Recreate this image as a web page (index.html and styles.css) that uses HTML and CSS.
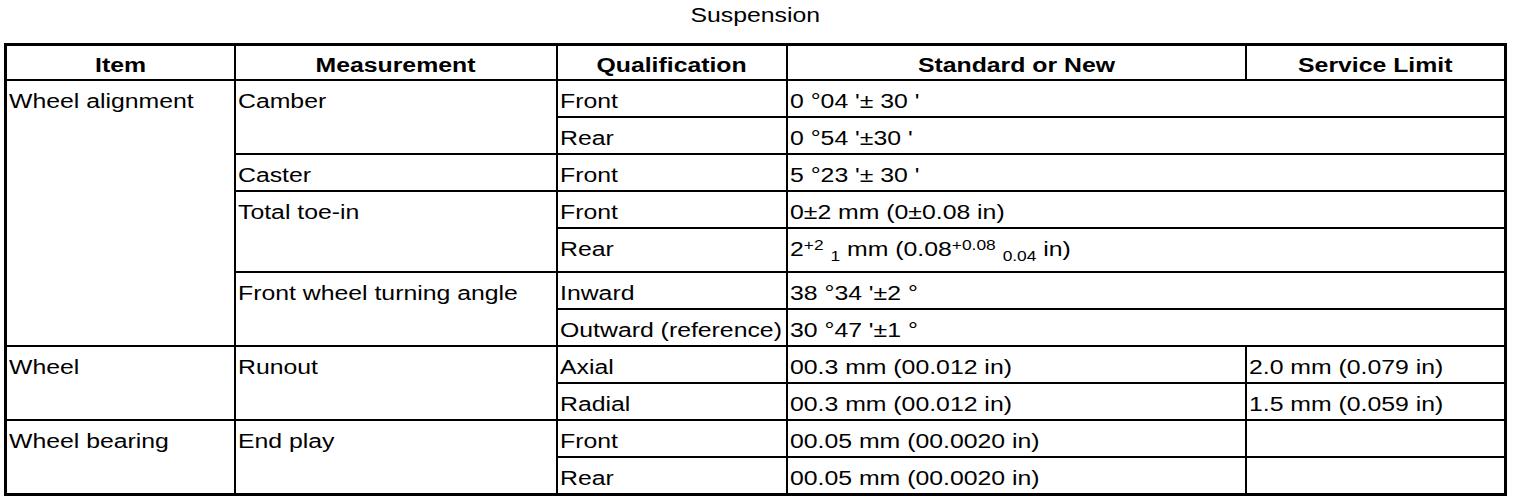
FILE: index.html
```html
<!DOCTYPE html>
<html>
<head>
<meta charset="utf-8">
<link rel="stylesheet" href="styles.css">
</head>
<body>
<div class="page">
  <div class="title"><span class="t c">Suspension</span></div>
  <table class="spec">
    <colgroup>
      <col class="c1"><col class="c2"><col class="c3"><col class="c4"><col class="c5">
    </colgroup>
    <thead>
      <tr class="head">
        <th><span class="t c">Item</span></th>
        <th><span class="t c">Measurement</span></th>
        <th><span class="t c">Qualification</span></th>
        <th><span class="t c">Standard or New</span></th>
        <th><span class="t c">Service Limit</span></th>
      </tr>
    </thead>
    <tbody>
      <tr>
        <td rowspan="7"><span class="t">Wheel alignment</span></td>
        <td rowspan="2"><span class="t">Camber</span></td>
        <td><span class="t">Front</span></td>
        <td colspan="2"><span class="t">0 °04 '± 30 '</span></td>
      </tr>
      <tr>
        <td><span class="t">Rear</span></td>
        <td colspan="2"><span class="t">0 °54 '±30 '</span></td>
      </tr>
      <tr>
        <td><span class="t">Caster</span></td>
        <td><span class="t">Front</span></td>
        <td colspan="2"><span class="t">5 °23 '± 30 '</span></td>
      </tr>
      <tr>
        <td rowspan="2"><span class="t">Total toe-in</span></td>
        <td><span class="t">Front</span></td>
        <td colspan="2"><span class="t">0±2 mm (0±0.08 in)</span></td>
      </tr>
      <tr class="tall">
        <td><span class="t">Rear</span></td>
        <td colspan="2"><span class="t">2<sup>+2</sup> <sub>1</sub> mm (0.08<sup>+0.08</sup> <sub>0.04</sub> in)</span></td>
      </tr>
      <tr>
        <td rowspan="2"><span class="t">Front wheel turning angle</span></td>
        <td><span class="t">Inward</span></td>
        <td colspan="2"><span class="t">38 °34 '±2 °</span></td>
      </tr>
      <tr>
        <td><span class="t">Outward (reference)</span></td>
        <td colspan="2"><span class="t">30 °47 '±1 °</span></td>
      </tr>
      <tr>
        <td rowspan="2"><span class="t">Wheel</span></td>
        <td rowspan="2"><span class="t">Runout</span></td>
        <td><span class="t">Axial</span></td>
        <td><span class="t">00.3 mm (00.012 in)</span></td>
        <td><span class="t">2.0 mm (0.079 in)</span></td>
      </tr>
      <tr>
        <td><span class="t">Radial</span></td>
        <td><span class="t">00.3 mm (00.012 in)</span></td>
        <td><span class="t">1.5 mm (0.059 in)</span></td>
      </tr>
      <tr>
        <td rowspan="2"><span class="t">Wheel bearing</span></td>
        <td rowspan="2"><span class="t">End play</span></td>
        <td><span class="t">Front</span></td>
        <td><span class="t">00.05 mm (00.0020 in)</span></td>
        <td></td>
      </tr>
      <tr>
        <td><span class="t">Rear</span></td>
        <td><span class="t">00.05 mm (00.0020 in)</span></td>
        <td></td>
      </tr>
    </tbody>
  </table>
</div>
</body>
</html>
```

FILE: styles.css
```css
html, body {
  margin: 0;
  padding: 0;
  background: #fff;
}
body {
  font-family: "Liberation Sans", Arial, sans-serif;
  font-size: 20px;
  color: #000;
}
.page {
  padding: 0 0 0 4px;
  width: 1503px;
}
.title {
  height: 43px;
  text-align: center;
  line-height: 22px;
  padding-top: 4px;
  box-sizing: border-box;
}
.t {
  display: inline-block;
  white-space: nowrap;
  transform: scaleX(1.24);
  transform-origin: left center;
  line-height: 22px;
}
.t.c {
  transform-origin: center center;
}
.spec {
  border-collapse: collapse;
  table-layout: fixed;
  width: 1503px;
  border: 3px solid #000;
}
.c1 { width: 229px; }
.c2 { width: 322px; }
.c3 { width: 230px; }
.c4 { width: 459px; }
.c5 { width: 260px; }
.spec th, .spec td {
  border: 2px solid #000;
  padding: 9px 0 0 2px;
  vertical-align: top;
  text-align: left;
  overflow: visible;
}
.spec th {
  font-weight: bold;
  text-align: center;
  padding: 8px 0 0 0;
  height: 25px;
}
.spec td {
  height: 26px;
}
.tall td {
  height: 33px;
}
sup, sub {
  font-size: 14px;
  line-height: 0;
}
sup { vertical-align: 6px; }
sub { vertical-align: -5px; }
```
